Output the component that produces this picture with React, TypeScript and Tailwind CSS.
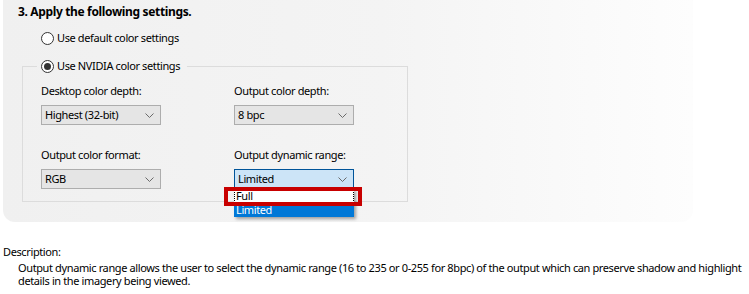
import React from "react";

const Chevron = () => (
  <svg width="9" height="5" viewBox="0 0 9 5" className="shrink-0">
    <path d="M0.5 0.5 L4.5 4.5 L8.5 0.5" fill="none" stroke="#6a6a6a" strokeWidth="1" />
  </svg>
);

const Radio = ({ checked }: { checked?: boolean }) => (
  <span className="flex h-[13px] w-[13px] shrink-0 items-center justify-center rounded-full border border-[#333333] bg-white">
    {checked && <span className="h-[7px] w-[7px] rounded-full bg-[#333333]" />}
  </span>
);

const Combo = ({ value, active }: { value: string; active?: boolean }) => (
  <div
    className={
      active
        ? "flex h-[20px] w-[120px] items-center justify-between border border-[#005499] bg-[#cce4f7] pl-[3px] pr-[6px]"
        : "flex h-[20px] w-[120px] items-center justify-between border border-[#adadad] bg-[#e5e5e5] pl-[3px] pr-[6px]"
    }
  >
    <span className="leading-[16px]">{value}</span>
    <Chevron />
  </div>
);

export default function App() {
  return (
    <div className="h-[294px] w-[749px] overflow-hidden bg-white font-['Noto_Sans',sans-serif] text-[11px] leading-[16px] tracking-[-0.38px] text-black">
      <div className="ml-[3px] h-[222px] w-[690px] rounded-b-[12px] bg-linear-to-r from-[#f0f0f0] via-[#f4f4f4] via-55% to-[#fdfdfd] pl-[15px] pt-[4px]">
        <div className="text-[12px] font-bold tracking-[-0.35px]">3. Apply the following settings.</div>
        <div className="ml-[23px] mt-[10px] flex items-center gap-[3px]">
          <Radio />
          <span>Use default color settings</span>
        </div>
        <fieldset className="ml-[4px] mt-[12px] w-[386px] border border-[#dcdcdc] pb-[12px] pl-[18px]">
          <legend className="-ml-[4px] flex items-center gap-[3px] pl-[4px] pr-[7px]">
            <Radio checked />
            <span>Use NVIDIA color settings</span>
          </legend>
          <div className="mt-[9px] grid grid-cols-[193px_160px]">
            <div className="flex flex-col">
              <span>Desktop color depth:</span>
              <div className="mt-[6px]">
                <Combo value="Highest (32-bit)" />
              </div>
              <span className="mt-[22px]">Output color format:</span>
              <div className="mt-[6px]">
                <Combo value="RGB" />
              </div>
            </div>
            <div className="flex flex-col">
              <span>Output color depth:</span>
              <div className="mt-[6px]">
                <Combo value="8 bpc" />
              </div>
              <span className="mt-[22px]">Output dynamic range:</span>
              <div className="relative mt-[6px]">
                <Combo value="Limited" active />
                <div className="absolute left-0 top-full z-10 w-[120px] bg-white shadow-[2px_2px_3px_rgba(0,0,0,0.35)]">
                  <div className="h-[14px] border border-dotted border-black pl-[1px] leading-[12px]">Full</div>
                  <div className="h-[14px] bg-[#0078d7] pl-[2px] leading-[14px] text-white">Limited</div>
                </div>
                <div className="absolute left-[-10px] top-[18px] z-20 h-[19px] w-[138px] border-[4px] border-[#c80000]" />
              </div>
            </div>
          </div>
        </fieldset>
      </div>
      <div className="mt-[23px] pl-[3px] leading-[13px]">
        <div>Description:</div>
        <div className="mt-[3px] pl-[15px]">
          <div className="whitespace-nowrap">
            Output dynamic range allows the user to select the dynamic range (16 to 235 or 0-255 for 8bpc) of the output which can preserve shadow and highlight
          </div>
          <div className="whitespace-nowrap">details in the imagery being viewed.</div>
        </div>
      </div>
    </div>
  );
}
